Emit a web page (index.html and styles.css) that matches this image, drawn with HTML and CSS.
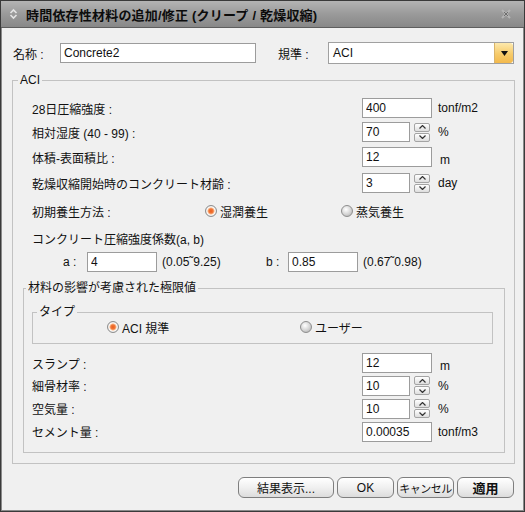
FILE: index.html
```html
<!DOCTYPE html>
<html lang="ja">
<head>
    <meta charset="UTF-8">
    <title>時間依存性材料の追加/修正</title>
    <link rel="stylesheet" href="styles.css">
</head>
<body>
    <div class="window">
        <div class="titlebar">
            <svg class="title-icon" width="9" height="12" viewBox="0 0 9 12">
                <path d="M1.5 5 L4.5 2 L7.5 5" fill="none" stroke="#e4e4e4" stroke-width="1.6"/>
                <path d="M1.5 7 L4.5 10 L7.5 7" fill="none" stroke="#e4e4e4" stroke-width="1.6"/>
            </svg>
            <span class="title-text">時間依存性材料の追加/修正 (クリープ / 乾燥収縮)</span>
            <svg class="close" width="10" height="10" viewBox="0 0 10 10">
                <path d="M1 1 L9 9 M9 1 L1 9" stroke="#b4b4b4" stroke-width="2"/>
                <path d="M3 3 L7 7 M7 3 L3 7" stroke="#6e6e6e" stroke-width="1"/>
            </svg>
        </div>

        <div class="content">
            <div class="name-row">
                <span class="name-label">名称 :</span>
                <input class="field name-field" type="text" value="Concrete2">
                <span class="code-label">規準 :</span>
                <div class="select">
                    <span class="select-value">ACI</span>
                    <span class="select-btn">
                        <svg width="7" height="5" viewBox="0 0 7 5"><path d="M0 0 H7 L3.5 5 Z" fill="#111"/></svg>
                    </span>
                </div>
            </div>

            <fieldset class="group outer">
                <legend class="legend-aci">ACI</legend>
                <div class="params">
                    <div class="row h24">
                        <span class="label">28日圧縮強度 :</span>
                        <input class="field wide" type="text" value="400">
                        <span class="unit">tonf/m2</span>
                    </div>
                    <div class="row h24">
                        <span class="label">相対湿度 (40 - 99) :</span>
                        <input class="field narrow" type="text" value="70">
                        <span class="spinner"><span class="spin-btn"><svg width="7" height="4" viewBox="0 0 7 4"><path d="M0.5 3.5 L3.5 0.5 L6.5 3.5" fill="none" stroke="#333" stroke-width="1.2"/></svg></span><span class="spin-btn"><svg width="7" height="4" viewBox="0 0 7 4"><path d="M0.5 0.5 L3.5 3.5 L6.5 0.5" fill="none" stroke="#333" stroke-width="1.2"/></svg></span></span>
                        <span class="unit">%</span>
                    </div>
                    <div class="row h26">
                        <span class="label">体積-表面積比 :</span>
                        <input class="field wide" type="text" value="12">
                        <span class="unit low">m</span>
                    </div>
                    <div class="row h26">
                        <span class="label">乾燥収縮開始時のコンクリート材齢 :</span>
                        <input class="field narrow" type="text" value="3">
                        <span class="spinner"><span class="spin-btn"><svg width="7" height="4" viewBox="0 0 7 4"><path d="M0.5 3.5 L3.5 0.5 L6.5 3.5" fill="none" stroke="#333" stroke-width="1.2"/></svg></span><span class="spin-btn"><svg width="7" height="4" viewBox="0 0 7 4"><path d="M0.5 0.5 L3.5 3.5 L6.5 0.5" fill="none" stroke="#333" stroke-width="1.2"/></svg></span></span>
                        <span class="unit">day</span>
                    </div>
                    <div class="row h30">
                        <span class="cure-label">初期養生方法 :</span>
                        <span class="option cure-first"><span class="radio on"></span>湿潤養生</span>
                        <span class="option"><span class="radio"></span>蒸気養生</span>
                    </div>
                    <div class="row h24">
                        <span>コンクリート圧縮強度係数(a, b)</span>
                    </div>
                    <div class="row h24 coef">
                        <span class="coef-label">a :</span>
                        <input class="field wide" type="text" value="4">
                        <span class="range">(0.05˜9.25)</span>
                        <span class="coef-label b">b :</span>
                        <input class="field wide" type="text" value="0.85">
                        <span class="range">(0.67˜0.98)</span>
                    </div>
                </div>

                <fieldset class="group inner">
                    <legend class="legend-limit">材料の影響が考慮された極限値</legend>
                    <fieldset class="group type">
                        <legend class="legend-type">タイプ</legend>
                        <div class="row h16">
                            <span class="option type-first"><span class="radio on"></span>ACI 規準</span>
                            <span class="option"><span class="radio"></span>ユーザー</span>
                        </div>
                    </fieldset>
                    <div class="limits">
                        <div class="row h22">
                            <span class="label">スランプ :</span>
                            <input class="field wide" type="text" value="12">
                            <span class="unit low">m</span>
                        </div>
                        <div class="row h23">
                            <span class="label">細骨材率 :</span>
                            <input class="field narrow" type="text" value="10">
                            <span class="spinner"><span class="spin-btn"><svg width="7" height="4" viewBox="0 0 7 4"><path d="M0.5 3.5 L3.5 0.5 L6.5 3.5" fill="none" stroke="#333" stroke-width="1.2"/></svg></span><span class="spin-btn"><svg width="7" height="4" viewBox="0 0 7 4"><path d="M0.5 0.5 L3.5 3.5 L6.5 0.5" fill="none" stroke="#333" stroke-width="1.2"/></svg></span></span>
                            <span class="unit">%</span>
                        </div>
                        <div class="row h23">
                            <span class="label">空気量 :</span>
                            <input class="field narrow" type="text" value="10">
                            <span class="spinner"><span class="spin-btn"><svg width="7" height="4" viewBox="0 0 7 4"><path d="M0.5 3.5 L3.5 0.5 L6.5 3.5" fill="none" stroke="#333" stroke-width="1.2"/></svg></span><span class="spin-btn"><svg width="7" height="4" viewBox="0 0 7 4"><path d="M0.5 0.5 L3.5 3.5 L6.5 0.5" fill="none" stroke="#333" stroke-width="1.2"/></svg></span></span>
                            <span class="unit">%</span>
                        </div>
                        <div class="row h23">
                            <span class="label">セメント量 :</span>
                            <input class="field wide" type="text" value="0.00035">
                            <span class="unit">tonf/m3</span>
                        </div>
                    </div>
                </fieldset>
            </fieldset>

            <div class="buttons">
                <button class="btn result">結果表示...</button>
                <button class="btn small">OK</button>
                <button class="btn small cancel">キャンセル</button>
                <button class="btn small apply">適用</button>
            </div>
        </div>
    </div>
</body>
</html>
```

FILE: styles.css
```css
* {
    margin: 0;
    padding: 0;
    box-sizing: border-box;
}

body {
    font-family: 'Liberation Sans', 'Noto Sans CJK JP', sans-serif;
    font-size: 12px;
    color: #111;
    background-color: #f0f0f0;
    width: 525px;
    height: 512px;
    overflow: hidden;
}

.window {
    width: 525px;
    height: 512px;
    border: 1px solid #3a3a3a;
    box-shadow: inset 1px 0 #8a8a8a, inset -1px 0 #8a8a8a, inset 0 -1px #8a8a8a;
    background-color: #f0f0f0;
    display: flex;
    flex-direction: column;
}

.titlebar {
    height: 27px;
    background: linear-gradient(#b4b4b4, #9a9a9a 50%, #888888);
    border-bottom: 1px solid #5e5e5e;
    display: flex;
    align-items: center;
    padding: 0 13px 0 8px;
}

.title-icon {
    margin-right: 8px;
}

.title-text {
    flex: 1;
    font-size: 13px;
    font-weight: bold;
    color: #0c0c0c;
    letter-spacing: 0.2px;
}

.content {
    padding: 14px 9px 0 11px;
}

/* name / code row */

.name-row {
    display: flex;
    align-items: center;
    height: 22px;
}

.name-label {
    width: 48px;
    padding-left: 1px;
}

.name-field {
    width: 196px;
    height: 22px;
}

.code-label {
    width: 50px;
    margin-left: 22px;
}

.select {
    width: 186px;
    height: 22px;
    border: 1px solid #a0a0a0;
    background-color: #fff;
    display: flex;
    align-items: center;
}

.select-value {
    flex: 1;
    padding-left: 4px;
}

.select-btn {
    width: 19px;
    height: 20px;
    background: linear-gradient(#fde9ad, #f7cb6a 55%, #f3b94c);
    border-left: 1px solid #d9b46a;
    border-radius: 0 3px 3px 0;
    display: flex;
    align-items: center;
    justify-content: center;
}

/* group boxes */

.group {
    border: 1px solid #c2c2c2;
    min-width: 0;
}

.group legend {
    line-height: 14px;
    padding: 0 2px;
}

.outer {
    margin-top: 9px;
    padding: 9px 9px 10px 10px;
}

.legend-aci {
    margin-left: -5px;
}

.params {
    padding-left: 9px;
}

.inner {
    margin-top: 7px;
    padding: 10px 11px 9px 8px;
}

.legend-limit {
    margin-left: -6px;
}

.type {
    padding: 0 0 8px 0;
}

.legend-type {
    margin-left: 4px;
}

.limits {
    margin-top: 8px;
}

/* rows */

.row {
    display: flex;
    align-items: center;
}

.h16 { height: 16px; }
.h22 { height: 22px; }
.h23 { height: 23px; }
.h24 { height: 24px; }
.h26 { height: 26px; }
.h30 { height: 30px; }

.label {
    width: 330px;
}

.field {
    height: 20px;
    border: 1px solid #9c9c9c;
    background-color: #fff;
    font-family: 'Liberation Sans', 'Noto Sans CJK JP', sans-serif;
    font-size: 12px;
    color: #111;
    padding: 0 3px;
    outline: none;
}

.field.wide {
    width: 70px;
}

.field.narrow {
    width: 48px;
}

.unit {
    margin-left: 6px;
}

.unit.low {
    margin-left: 8px;
    padding-top: 5px;
}

.spinner {
    display: flex;
    flex-direction: column;
    gap: 1px;
    margin-left: 4px;
    margin-right: 2px;
}

.spin-btn {
    width: 16px;
    height: 9px;
    border: 1px solid #a4a4a4;
    border-radius: 2px;
    background: linear-gradient(#ffffff, #dedede);
    display: flex;
    align-items: center;
    justify-content: center;
}

/* radios */

.option {
    display: flex;
    align-items: center;
    gap: 3px;
}

.radio {
    width: 12px;
    height: 12px;
    border-radius: 50%;
    border: 1px solid #8e8e8e;
    background: radial-gradient(circle at 40% 35%, #ffffff, #d4d4d4 55%, #a8a8a8);
}

.radio.on {
    background: radial-gradient(circle, #ec5a1c 0, #f07a3a 2.2px, #fbd0b0 3.4px, #ffffff 4px, #d2d2d2 5.5px);
}

.cure-label {
    width: 173px;
}

.cure-first {
    width: 136px;
}

.type-first {
    margin-left: 74px;
    width: 193px;
}

/* coefficient row */

.coef {
    padding-left: 31px;
}

.coef-label {
    width: 24px;
}

.coef-label.b {
    width: 22px;
}

.range {
    margin-left: 5px;
    width: 104px;
}

/* buttons */

.buttons {
    display: flex;
    justify-content: flex-end;
    gap: 3px;
    margin-top: 13px;
    padding-right: 1px;
}

.btn {
    height: 21px;
    padding: 0;
    white-space: nowrap;
    border: 1px solid #7e7e7e;
    border-radius: 6px;
    background: linear-gradient(#ffffff, #f0f0f0 50%, #dcdcdc);
    font-family: 'Liberation Sans', 'Noto Sans CJK JP', sans-serif;
    font-size: 12px;
    color: #111;
}

.btn.result {
    width: 96px;
}

.btn.small {
    width: 57px;
}

.btn.cancel {
    font-size: 11px;
    letter-spacing: -0.5px;
}

.btn.apply {
    font-weight: bold;
    font-size: 13px;
}
```
